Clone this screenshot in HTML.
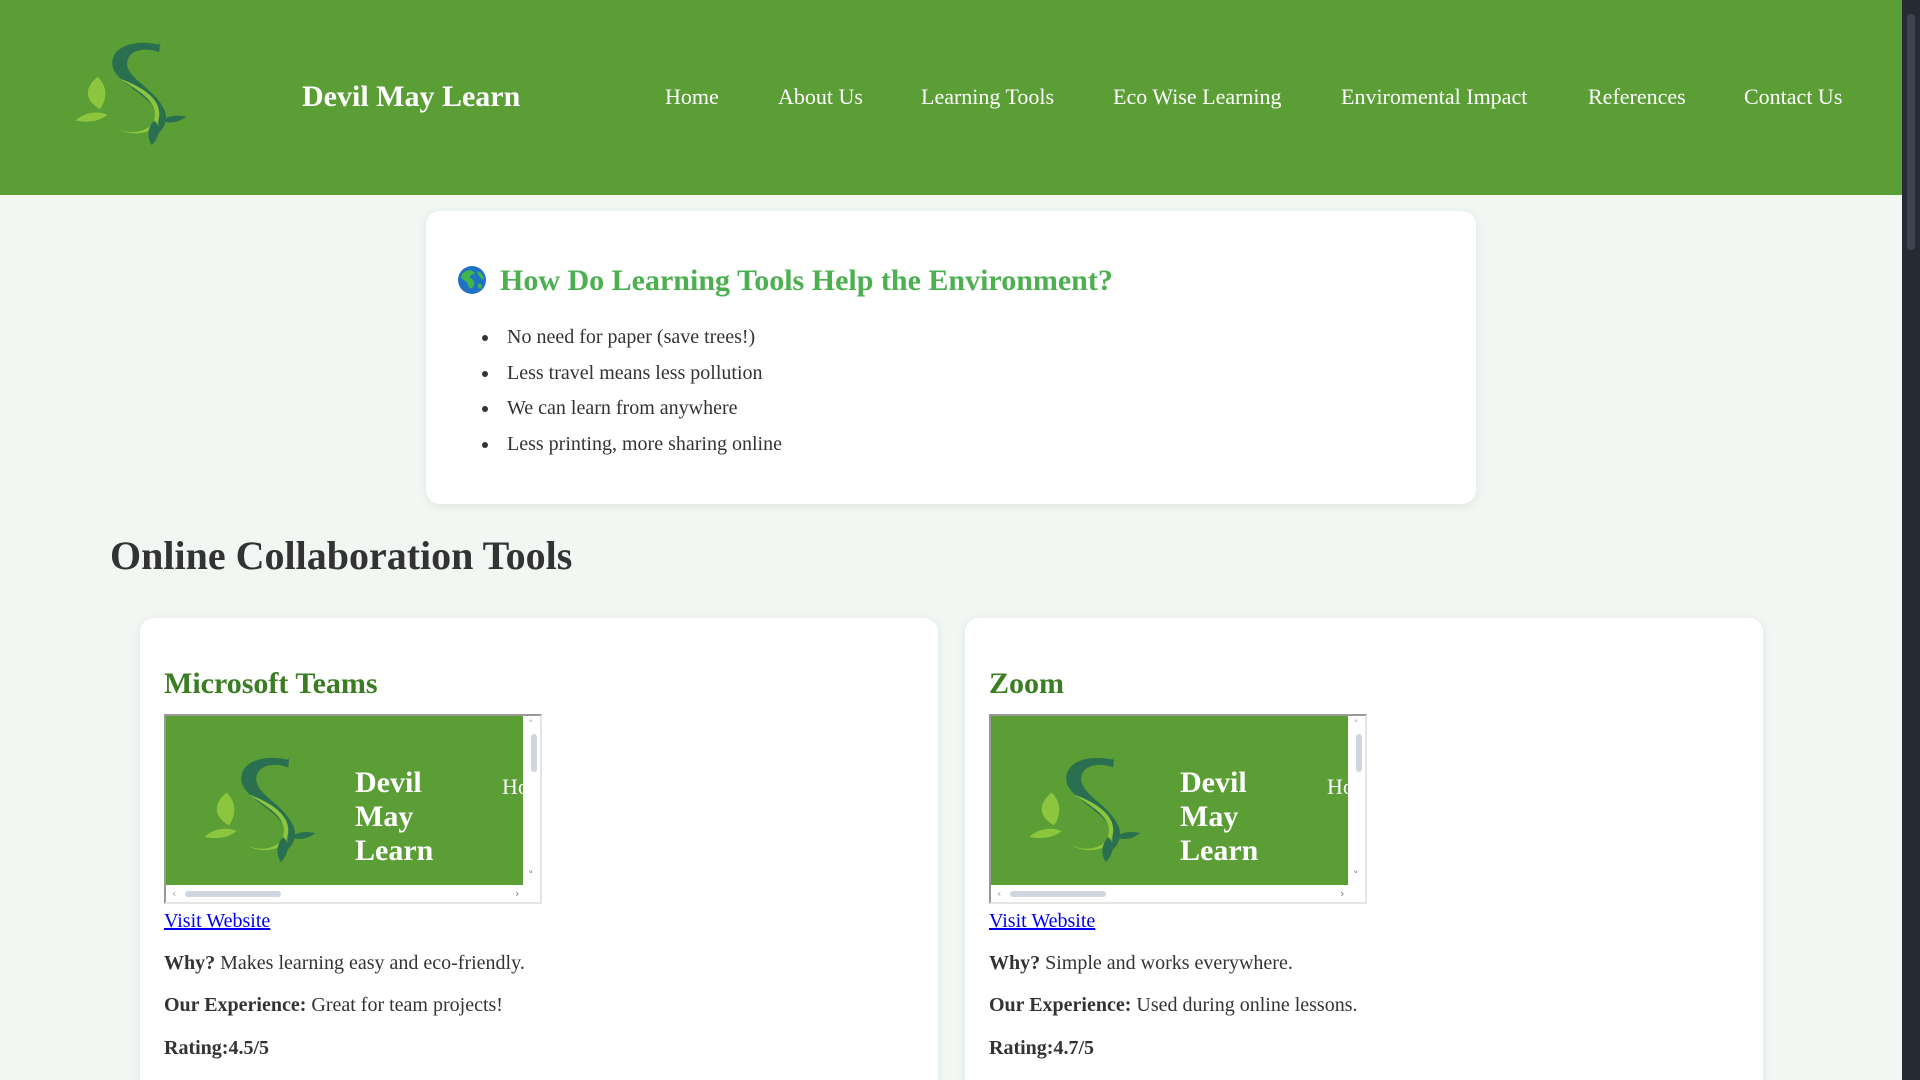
<!DOCTYPE html>
<html><head><meta charset="utf-8">
<style>
*{margin:0;padding:0;box-sizing:border-box}
html,body{width:1920px;height:1080px;overflow:hidden}
body{background:#f2f7f3;font-family:"Liberation Serif",serif;color:#333;position:relative}
.a{position:absolute;white-space:nowrap;line-height:1}
header{position:absolute;left:0;top:0;width:1902px;height:195px;background:#5a9e35}
.nav{color:#fff;font-size:22px;top:86px}
.sb{position:absolute;left:1902px;top:0;width:18px;height:1080px;background:#262a35}
.card{position:absolute;background:#fff;border-radius:14px;box-shadow:0 2px 10px rgba(0,0,0,0.08)}
.b{font-weight:bold}
.t19{font-size:20px}
.frame{position:absolute;width:378px;height:190px;border:2px solid #999;border-right-color:#e5e5e5;border-bottom-color:#e5e5e5;background:#fff;overflow:hidden}
.fg{position:absolute;left:0;top:0;width:357px;height:169px;background:#5a9e35}
.ar{position:absolute;font-size:11px;color:#777;line-height:1;font-family:"DejaVu Sans",sans-serif}
a{color:#00e}
ul li{position:relative}
.dot{position:absolute;left:-25px;top:15px;width:6px;height:6px;border-radius:50%;background:#333}
</style></head><body>
<svg width="0" height="0" style="position:absolute">
<defs>
<g id="logo">
<path d="M70 8 C50 2 30 10 32 30 C34 48 62 60 68 80 C72 92 68 102 62 108 C74 100 78 88 74 76 C66 54 44 44 44 28 C44 14 58 10 70 16 L71 4 Z" fill="#2a7050"/>
<path d="M38 44 C60 54 76 70 68 92 C62 104 44 104 36 96 C46 104 64 100 66 86 C70 68 52 56 38 44 Z" fill="#8cc63f"/>
<path d="M20 42 C10 52 8 66 22 76 C28 64 28 52 20 42 Z" fill="#8cc63f"/>
<path d="M2 88 C10 78 22 78 28 82 C20 90 10 90 2 88 Z" fill="#8cc63f"/>
<path d="M66 88 C60 96 60 106 64 114 C70 106 72 96 66 88 Z" fill="#2a7050"/>
<path d="M72 88 C78 82 86 82 92 84 C86 90 78 92 72 88 Z" fill="#2a7050"/>
</g>
</defs></svg>

<header>
<svg style="position:absolute;left:73px;top:37px" width="117" height="112" viewBox="0 0 95 118" preserveAspectRatio="none"><use href="#logo"/></svg>
<div class="a b" style="left:302px;top:82px;font-size:30px;color:#fff">Devil May Learn</div>
<div class="a nav" style="left:665px">Home</div>
<div class="a nav" style="left:778px">About Us</div>
<div class="a nav" style="left:921px">Learning Tools</div>
<div class="a nav" style="left:1113px">Eco Wise Learning</div>
<div class="a nav" style="left:1341px">Enviromental Impact</div>
<div class="a nav" style="left:1588px">References</div>
<div class="a nav" style="left:1744px">Contact Us</div>
</header>
<div class="sb"><div style="position:absolute;left:5px;top:14px;width:8px;height:236px;background:#3e4350;border-radius:4px"></div></div>

<div class="card" style="left:426px;top:211px;width:1050px;height:293px"></div>
<svg style="position:absolute;left:457px;top:265px" width="30" height="30" viewBox="0 0 30 30"><circle cx="15" cy="15" r="14" fill="#1f72c4"/><path d="M6 8 C10 4 16 5 18 8 C16 10 12 10 13 13 C16 14 18 16 17 20 C15 25 12 24 11 20 C10 16 6 15 4 13 C4 11 5 9 6 8 Z M20 6 C24 7 27 11 27 15 C24 14 21 11 20 6 Z M21 19 C24 18 26 20 24 24 C22 24 20 22 21 19Z" fill="#3fb54a"/></svg>
<div class="a b" style="left:500px;top:266px;font-size:30px;color:#4caf50">How Do Learning Tools Help the Environment?</div>
<ul class="a t19" style="left:507px;top:320px;line-height:35.5px;list-style:none">
<li><span class="dot"></span>No need for paper (save trees!)</li>
<li><span class="dot"></span>Less travel means less pollution</li>
<li><span class="dot"></span>We can learn from anywhere</li>
<li><span class="dot"></span>Less printing, more sharing online</li>
</ul>

<div class="a b" style="left:110px;top:536px;font-size:40px;color:#333">Online Collaboration Tools</div>

<div class="card" style="left:140px;top:618px;width:798px;height:480px"></div>
<div class="card" style="left:965px;top:618px;width:798px;height:480px"></div>

<!-- left card -->
<div class="a b" style="left:164px;top:669px;font-size:30px;color:#3a7d22">Microsoft Teams</div>
<div class="frame" style="left:164px;top:714px">
<div class="fg"></div>
<svg style="position:absolute;left:36px;top:36px" width="117" height="114" viewBox="0 0 95 118" preserveAspectRatio="none"><use href="#logo"/></svg>
<div class="a b" style="left:189px;top:50px;font-size:30px;color:#fff;line-height:34px">Devil<br>May<br>Learn</div>
<div class="a" style="left:336px;top:60px;font-size:22px;color:#fff">Ho</div>
<div style="position:absolute;left:365px;top:18px;width:6px;height:38px;background:#cfd6df;border-radius:3px"></div>
<div style="position:absolute;left:19px;top:175px;width:96px;height:6px;background:#cfd6df;border-radius:3px"></div>
<div class="ar" style="left:362px;top:3px;color:#aaa">˄</div>
<div class="ar" style="left:362px;top:154px">˅</div>
<div class="ar" style="left:6px;top:172px;color:#aaa">‹</div>
<div class="ar" style="left:349px;top:172px">›</div>
</div>
<a class="a t19" style="left:164px;top:911px" href="#">Visit Website</a>
<div class="a t19" style="left:164px;top:953px"><b>Why?</b> Makes learning easy and eco-friendly.</div>
<div class="a t19" style="left:164px;top:995px"><b>Our Experience:</b> Great for team projects!</div>
<div class="a t19 b" style="left:164px;top:1038px">Rating:4.5/5</div>

<!-- right card -->
<div class="a b" style="left:989px;top:669px;font-size:30px;color:#3a7d22">Zoom</div>
<div class="frame" style="left:989px;top:714px">
<div class="fg"></div>
<svg style="position:absolute;left:36px;top:36px" width="117" height="114" viewBox="0 0 95 118" preserveAspectRatio="none"><use href="#logo"/></svg>
<div class="a b" style="left:189px;top:50px;font-size:30px;color:#fff;line-height:34px">Devil<br>May<br>Learn</div>
<div class="a" style="left:336px;top:60px;font-size:22px;color:#fff">Ho</div>
<div style="position:absolute;left:365px;top:18px;width:6px;height:38px;background:#cfd6df;border-radius:3px"></div>
<div style="position:absolute;left:19px;top:175px;width:96px;height:6px;background:#cfd6df;border-radius:3px"></div>
<div class="ar" style="left:362px;top:3px;color:#aaa">˄</div>
<div class="ar" style="left:362px;top:154px">˅</div>
<div class="ar" style="left:6px;top:172px;color:#aaa">‹</div>
<div class="ar" style="left:349px;top:172px">›</div>
</div>
<a class="a t19" style="left:989px;top:911px" href="#">Visit Website</a>
<div class="a t19" style="left:989px;top:953px"><b>Why?</b> Simple and works everywhere.</div>
<div class="a t19" style="left:989px;top:995px"><b>Our Experience:</b> Used during online lessons.</div>
<div class="a t19 b" style="left:989px;top:1038px">Rating:4.7/5</div>
</body></html>
